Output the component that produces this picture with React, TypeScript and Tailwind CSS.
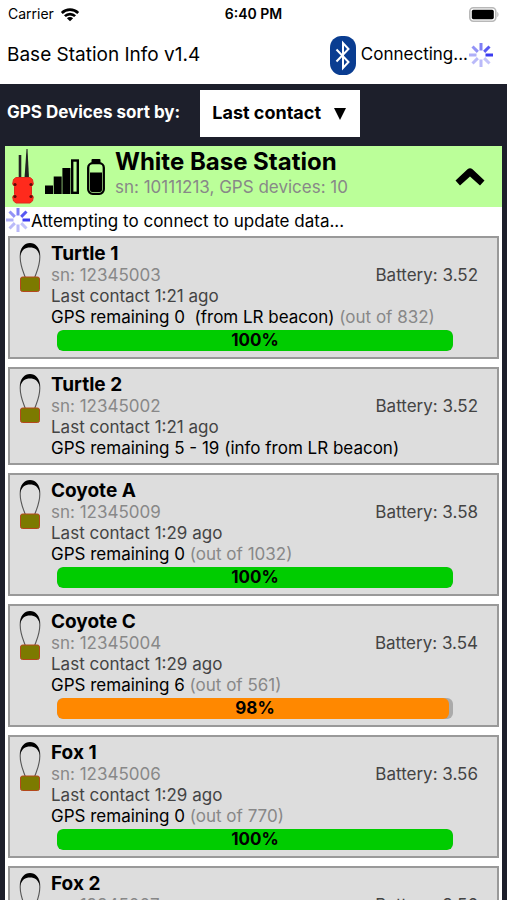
import React from 'react';

type Device = {
   name: string;
   sn: string;
   battery: string;
   lastContact: string;
   remaining: string;
   outOf?: string;
   percent?: number;
};

const devices: Device[] = [
   { name: 'Turtle 1', sn: '12345003', battery: '3.52', lastContact: '1:21', remaining: '0\u00a0 (from LR beacon)', outOf: '832', percent: 100 },
   { name: 'Turtle 2', sn: '12345002', battery: '3.52', lastContact: '1:21', remaining: '5 - 19 (info from LR beacon)' },
   { name: 'Coyote A', sn: '12345009', battery: '3.58', lastContact: '1:29', remaining: '0', outOf: '1032', percent: 100 },
   { name: 'Coyote C', sn: '12345004', battery: '3.54', lastContact: '1:29', remaining: '6', outOf: '561', percent: 98 },
   { name: 'Fox 1', sn: '12345006', battery: '3.56', lastContact: '1:29', remaining: '0', outOf: '770', percent: 100 },
   { name: 'Fox 2', sn: '12345007', battery: '3.56', lastContact: '1:29', remaining: '0', outOf: '770', percent: 100 },
];

// opacity of each spoke, clockwise from the top
const spokes = [0.65, 0.85, 1, 0.3, 0.35, 0.35, 0.4, 0.55];

const Spinner: React.FC = () => (
   <svg viewBox="0 0 26 26" className="w-[26px] h-[26px] shrink-0" aria-hidden="true">
      {spokes.map((opacity, i) => (
         <line key={i} x1="13" y1="1" x2="13" y2="8.5" stroke="#3b3bf0" strokeWidth="3" opacity={opacity} transform={`rotate(${i * 45} 13 13)`} />
      ))}
   </svg>
);

const StatusBar: React.FC = () => (
   <div className="grid grid-cols-3 items-center h-7 px-2 text-sm">
      <div className="flex items-center gap-[6px]">
         <span>Carrier</span>
         <svg viewBox="0 0 20 15" className="w-5 h-[15px]" aria-hidden="true">
            <g fill="none" stroke="#000" strokeWidth="2.6">
               <path d="M1.8 6a11.6 11.6 0 0 1 16.4 0" />
               <path d="M4.9 9.2a7.2 7.2 0 0 1 10.2 0" />
            </g>
            <path d="M10 14.3 6.9 11.2a4.4 4.4 0 0 1 6.2 0z" />
         </svg>
      </div>
      <div className="text-center font-semibold">6:40 PM</div>
      <svg viewBox="0 0 31 15" className="w-[31px] h-[15px] justify-self-end" aria-hidden="true">
         <rect x="1.8" y="0.8" width="26" height="13.4" rx="3.6" fill="#fff" stroke="#b8b8b8" strokeWidth="1.6" />
         <rect x="3.8" y="2.8" width="22" height="9.4" rx="1.6" />
         <path d="M29.3 5v5c1.6-.6 1.6-4.4 0-5z" fill="#b8b8b8" />
      </svg>
   </div>
);

const BluetoothIcon: React.FC = () => (
   <svg viewBox="0 0 26 39" className="w-[26px] h-[39px]" aria-hidden="true">
      <rect width="26" height="39" rx="11.5" fill="#0a3d91" />
      <path d="M6.5 13.5 18.5 26 13 32V7l5.5 6L6.5 25.5" fill="none" stroke="#fff" strokeWidth="2" strokeMiterlimit="8" />
   </svg>
);

const StationIcon: React.FC = () => (
   <svg viewBox="0 0 24 56" className="w-6 h-14" aria-hidden="true">
      <path d="M9 6v23" stroke="#222" strokeWidth="2.6" />
      <path d="M15.5 0h1L18 29h-4.5z" fill="#222" />
      <path d="M5 28.5h14l2.5 2 .8 4.500-1.800 2.500v8l1.800 2.500-.8 4-2.500 2H5l-2.500-2-.8-4 1.800-2.500v-8L1.700 35l.8-4.500z" fill="#ff2a1c" stroke="#e0281c" strokeWidth="1" />
      <g fill="#5b0d08">
         <circle cx="4" cy="35.5" r="1.6" />
         <circle cx="20" cy="35.5" r="1.6" />
         <circle cx="4" cy="47.5" r="1.6" />
         <circle cx="20" cy="47.5" r="1.6" />
      </g>
   </svg>
);

const SignalIcon: React.FC = () => (
   <svg viewBox="0 0 34 36" className="w-[34px] h-9" aria-hidden="true">
      <rect x="0" y="26.5" width="8" height="8.5" />
      <rect x="8.7" y="17.5" width="8" height="17.5" />
      <rect x="17.4" y="9" width="8" height="26" />
      <rect x="27.2" y="1.5" width="5.6" height="32.3" fill="none" stroke="#000" strokeWidth="2.4" />
   </svg>
);

const BatteryIcon: React.FC = () => (
   <svg viewBox="0 0 18 36" className="w-[18px] h-9" aria-hidden="true">
      <rect x="4.5" y="0" width="9" height="5" rx="1" />
      <rect x="1.2" y="4.2" width="15.6" height="30.6" rx="4.5" fill="none" stroke="#000" strokeWidth="2.3" />
      <path d="M3 13.5h12V31q0 2-2 2H5q-2 0-2-2z" />
   </svg>
);

const CollarIcon: React.FC = () => (
   <svg viewBox="0 0 22 50" className="w-[22px] h-[50px]" aria-hidden="true">
      <path d="M6.5 36C4 29 1.2 24 1.2 15 1.2 6 5 2.5 11 2.5S20.8 6 20.8 15c0 9-2.8 14-5.3 21" fill="none" stroke="#555" strokeWidth="1.1" />
      <path d="M1 14C1.5 5 5.5 1 11 1S20.5 5 21 14C19 7.5 16 5.5 11 5.5S3 7.5 1 14z" />
      <rect x="1.5" y="35" width="19" height="14.5" rx="2" fill="#7c7a00" stroke="#b4481c" strokeWidth="1" />
   </svg>
);

const DeviceCard: React.FC<{ device: Device }> = ({ device }) => (
   <li className="flex gap-[10px] border-2 border-[#999] bg-[#ddd] pl-[9px] pr-[19px] py-1">
      <div className="w-[22px] shrink-0">
         <CollarIcon />
      </div>
      <div className="flex-1 leading-[21px]">
         <h3 className="text-[19px] leading-[23px] font-bold">{device.name}</h3>
         <div className="flex justify-between">
            <span className="text-[#888]">sn: {device.sn}</span>
            <span className="text-[#444]">Battery: {device.battery}</span>
         </div>
         <p className="text-[#444]">Last contact {device.lastContact} ago</p>
         <p>
            GPS remaining {device.remaining}
            {device.outOf && <span className="text-[#888]"> (out of {device.outOf})</span>}
         </p>
         {device.percent !== undefined && (
            <div className="relative h-[21px] my-0.5 ml-[6px] mr-[25px] rounded-md bg-[#aaa] overflow-hidden">
               <div
                  className={device.percent === 100 ? 'h-full rounded-md bg-[#00cc00]' : 'h-full rounded-md bg-[#ff8800]'}
                  style={{ width: `${device.percent + (device.percent < 100 ? 1 : 0)}%` }}
               />
               <span className="absolute inset-0 text-center font-bold">{device.percent}%</span>
            </div>
         )}
      </div>
   </li>
);

const App: React.FC = () => {
   return (
      <div className="h-screen overflow-y-auto [scrollbar-width:none] bg-[#1d1f2b] text-black text-[17px] font-['Inter','Liberation_Sans',sans-serif]">
         <header className="bg-white">
            <StatusBar />
            <div className="flex items-center justify-between h-14 pl-[7px] pr-[13px] pb-[2px]">
               <h1 className="text-[19px]">Base Station Info v1.4</h1>
               <div className="flex items-center">
                  <BluetoothIcon />
                  <span className="ml-[5px]">Connecting...</span>
                  <Spinner />
               </div>
            </div>
         </header>

         <div className="flex items-center h-[62px] pl-[7px] pb-1 gap-5">
            <label htmlFor="sort" className="text-white font-bold">GPS Devices sort by:</label>
            <div className="relative">
               <select id="sort" className="appearance-none w-[160px] h-[47px] bg-white pl-3 text-lg font-bold">
                  <option>Last contact</option>
                  <option>Name</option>
                  <option>Battery</option>
               </select>
               <svg viewBox="0 0 12 12" className="absolute right-[14px] top-[18px] w-3 h-3 pointer-events-none" aria-hidden="true">
                  <path d="M0 0h12L6 12z" />
               </svg>
            </div>
         </div>

         <main className="mx-[5px] bg-white">
            <section>
               <div className="flex items-center h-[61px] bg-[#bbff99] pl-[6px] pr-[17px]">
                  <StationIcon />
                  <div className="flex items-center gap-2 ml-[10px]">
                     <SignalIcon />
                     <BatteryIcon />
                  </div>
                  <div className="flex-1 ml-[10px] pb-[6px]">
                     <h2 className="text-2xl leading-[26px] font-bold">White Base Station</h2>
                     <p className="leading-6 text-[#888]">sn: 10111213, GPS devices: 10</p>
                  </div>
                  <button aria-label="Collapse">
                     <svg viewBox="0 0 30 20" className="w-[30px] h-5" aria-hidden="true">
                        <path d="M12.5 2.2q2.5-2 5 0L29.5 13.5 25 18.500 15 9.500 5 18.500.5 13.500z" />
                     </svg>
                  </button>
               </div>
               <div className="flex items-start h-[29px]">
                  <Spinner />
                  <span className="leading-7">Attempting to connect to update data...</span>
               </div>
               <ul className="flex flex-col gap-2 px-[3px] pb-2">
                  {devices.map((device) => (
                     <DeviceCard key={device.sn} device={device} />
                  ))}
               </ul>
            </section>
         </main>
      </div>
   );
};

export default App;
